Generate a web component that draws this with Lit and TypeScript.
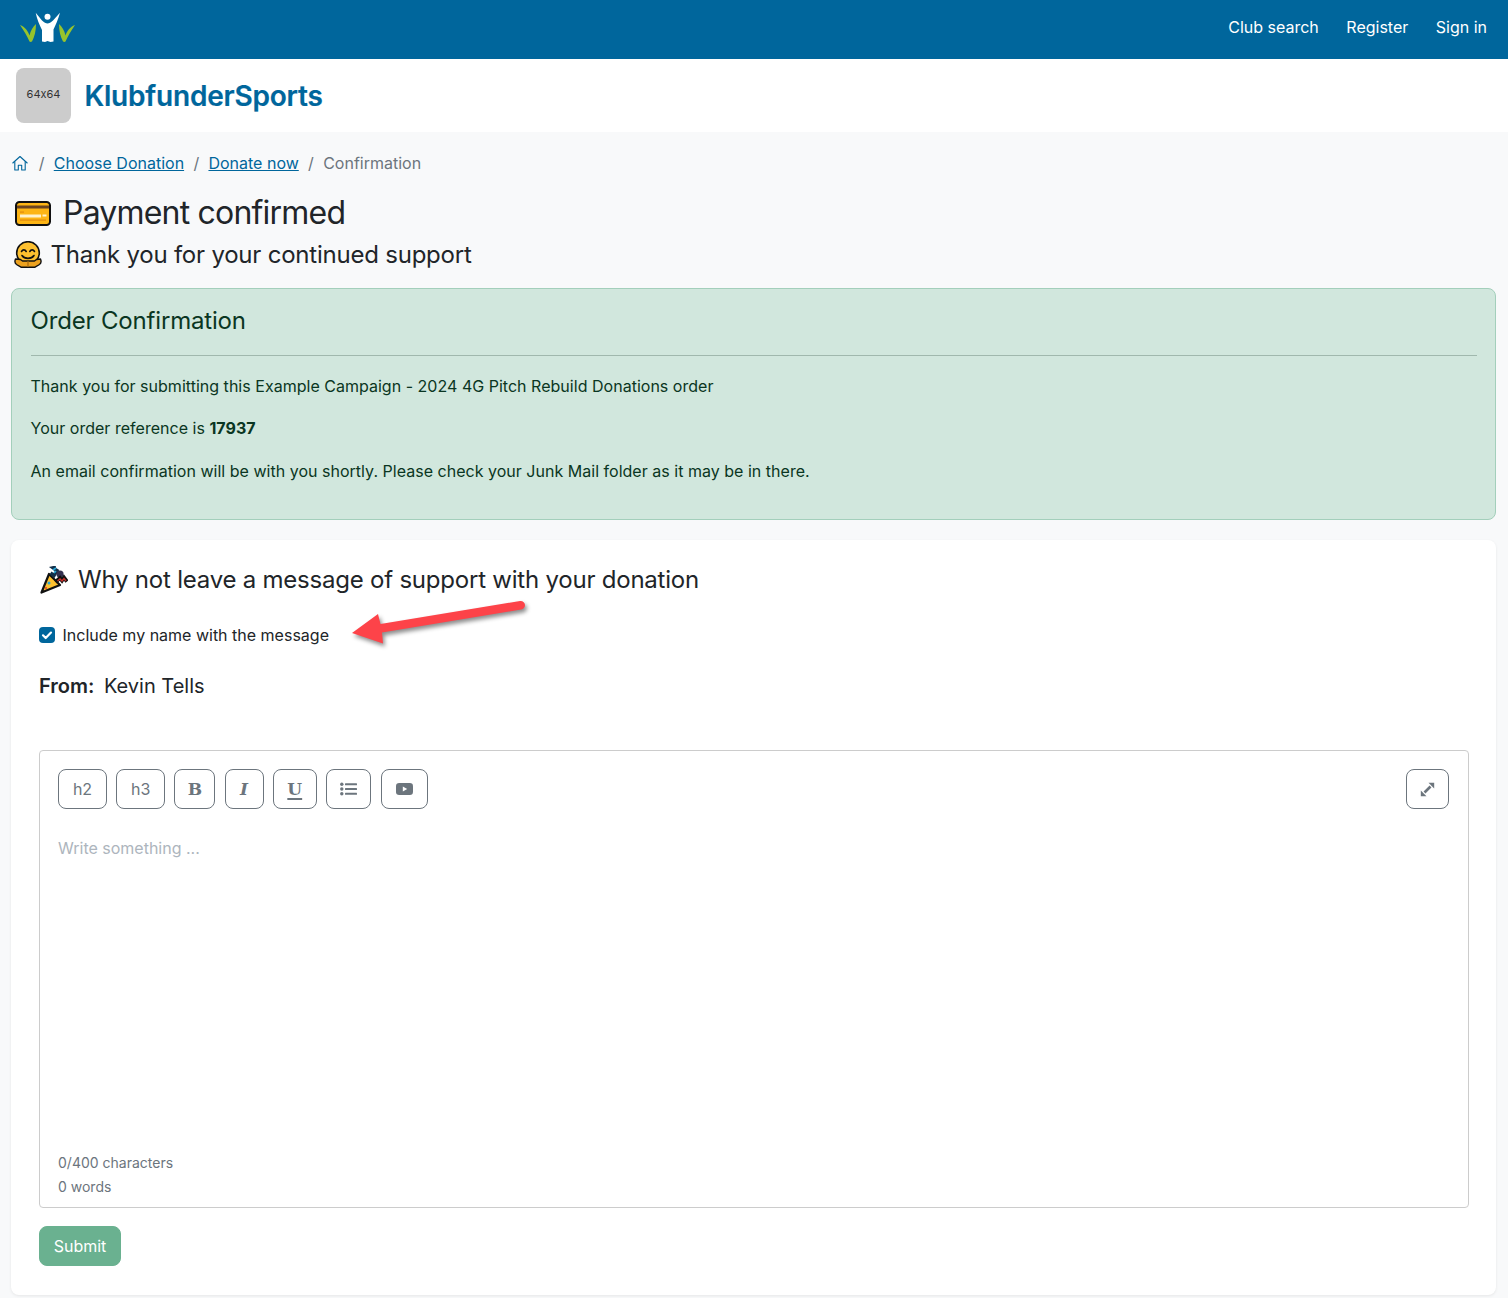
import { LitElement, html, css, svg } from "lit";
import { customElement } from "lit/decorators.js";

const logo = svg`<svg width="60" height="36" viewBox="18 10 60 36">
<path fill="#97c42c" d="M20 25C25 27 28 31 29.500 35.500C30.500 30.500 33 27 36 24C36 31 34.500 37 32 41.500C31 42 30 42 29.500 41.500C27 36 23.500 30 20 25Z"/>
<path fill="#97c42c" d="M75 25C70 27 67 31 65.500 35.500C64.500 30.500 62 27 59 24C59 31 60.500 37 63 41.500C64 42 65 42 65.500 41.500C68 36 71.500 30 75 25Z"/>
<circle cx="47.500" cy="16.800" r="3" fill="#fff"/>
<path fill="#fff" d="M35.700 12.700L42 20.500C44 22.500 46 23.500 47.500 23.500C49 23.500 51 22.500 53 20.500L60 12.700C58 20 55.500 25 53.500 29.500V41.500L50.500 42L47.500 41L45 42L42 41.500V30C39.500 25 37 19 35.700 12.700Z"/>
</svg>`;

const home = svg`<svg width="16" height="16" viewBox="0 0 16 16" fill="none" stroke="#00669c" stroke-width="1.100" stroke-linejoin="round" stroke-linecap="round"><path d="M.8 8L8 1.500L15.200 8"/><path d="M2.800 6.500V15H6.300V10.300H9.700V15H13.200V6.500"/></svg>`;

const card = svg`<svg class="ic-card" width="36" height="25" viewBox="0 0 36 25">
<rect x="1" y="1" width="34" height="23" rx="3.500" fill="#fdb515" stroke="#111" stroke-width="2"/>
<rect x="2" y="4.500" width="32" height="3" fill="#6b4420"/>
<rect x="5" y="13.500" width="21" height="3" fill="#fff2cc"/>
<rect x="27.500" y="13.500" width="4" height="2" fill="#fff2cc"/>
<rect x="5" y="10.500" width="4" height="1.200" fill="#e08a10"/>
<rect x="5" y="18.500" width="26" height="1.200" fill="#e08a10"/>
</svg>`;

const hug = svg`<svg class="ic-hug" width="28" height="27" viewBox="0 0 28 27">
<circle cx="14" cy="12" r="11.300" fill="#fdc02f" stroke="#111" stroke-width="1.600"/>
<path d="M7.500 10.500c1.200-2.200 3.500-2.200 4.700 0M15.800 10.500c1.200-2.200 3.500-2.200 4.700 0" fill="none" stroke="#111" stroke-width="1.600" stroke-linecap="round"/>
<path d="M8 14.500c2.500 3.800 9.500 3.800 12 0" fill="none" stroke="#111" stroke-width="1.600" stroke-linecap="round"/>
<path d="M1.500 18c-1 2.500-.5 4.500 1 5.500l4.500 2.700h14l4.500-2.700c1.500-1 2-3 1-5.500l-4 .5-2 1.500h-12l-2-1.500z" fill="#eda21f" stroke="#111" stroke-width="1.400" stroke-linejoin="round"/>
<path d="M14 20V26" stroke="#a86a10" stroke-width="1.200"/>
</svg>`;

const party = svg`<svg class="ic-party" width="28" height="28" viewBox="0 0 28 28">
<path d="M1.500 26.500L9 8L20 19Z" fill="#fdc02f" stroke="#111" stroke-width="2.200" stroke-linejoin="round"/>
<circle cx="9" cy="17" r="1.500" fill="#27a7d8"/><circle cx="6" cy="22" r="1.100" fill="#e0442e"/>
<path d="M10.500 7L14 9.500L17 4.500L13 1.800L16 1" fill="none" stroke="#12304a" stroke-width="3.400"/>
<path d="M13 4L16 2M14 7L16 5" stroke="#27a7d8" stroke-width="1.700"/>
<circle cx="20" cy="8" r="3.600" fill="#33304f"/>
<path d="M15.500 16L20 12L22 14.500L24 11.500L27 15.500" fill="none" stroke="#111" stroke-width="3.800"/>
<path d="M17.500 15L20 13L22 15L24 12.500L26 15" fill="none" stroke="#c9302c" stroke-width="1.400"/>
</svg>`;

const check = svg`<svg width="16" height="16" viewBox="0 0 16 16"><path d="M4 8.300l2.700 2.700L12 5.600" fill="none" stroke="#fff" stroke-width="2.200" stroke-linecap="round" stroke-linejoin="round"/></svg>`;

const list = svg`<svg width="17" height="14" viewBox="0 0 17 14" fill="#6c757d"><circle cx="1.800" cy="2.200" r="1.700"/><circle cx="1.800" cy="7" r="1.700"/><circle cx="1.800" cy="11.800" r="1.700"/><rect x="5" y="1.200" width="12" height="2" rx=".5"/><rect x="5" y="6" width="12" height="2" rx=".5"/><rect x="5" y="10.800" width="12" height="2" rx=".5"/></svg>`;

const yt = svg`<svg width="17" height="12" viewBox="0 0 17 12"><rect width="17" height="12" rx="3.200" fill="#6c757d"/><path d="M6.800 3.500L11.200 6L6.800 8.500Z" fill="#fff"/></svg>`;

const expand = svg`<svg width="15" height="15" viewBox="0 0 15 15" fill="#6c757d"><path d="M8.500.8H14.200V6.500Z"/><path d="M.8 8.500V14.200H6.500Z"/><path d="M4.500 10.500L10.500 4.500" stroke="#6c757d" stroke-width="2.600"/></svg>`;

const arrow = svg`<svg class="arrow" width="190" height="55" viewBox="345 595 190 55">
<path fill="#fd4349" d="M352 633L378 614L380.500 624L520 601C522.500 600.600 525 602.500 525 605C525 607.500 523.500 609 521 609.500L382 632.500L383 643.500Z"/>
</svg>`;

@customElement("app-root")
export class AppRoot extends LitElement {
  static styles = css`
    :host {
      display: block;
      min-height: 1298px;
      background: #f8f9fa;
      color: #212529;
      font-family: Inter, "Liberation Sans", sans-serif;
      font-size: 16px;
      line-height: 24px;
    }
    svg { display: block; flex: none; }
    .nav {
      height: 59px;
      background: #00669c;
      display: flex;
      align-items: center;
      justify-content: space-between;
      padding: 0 21px 0 18px;
    }
    .nav-links { display: flex; gap: 27.500px; margin-top: -6px; }
    .nav-links a { color: #fff; text-decoration: none; }
    .nav .logo { margin-top: -3px; }
    .brand {
      height: 73px;
      background: #fff;
      display: flex;
      align-items: center;
      gap: 13.500px;
      padding-left: 16px;
    }
    .ph {
      width: 55px;
      height: 55px;
      border-radius: 8px;
      background: #ccc;
      color: #333;
      font-size: 11px;
      font-feature-settings: "calt" 0;
      display: flex;
      align-items: center;
      justify-content: center;
      padding-bottom: 3px;
      box-sizing: border-box;
    }
    .brand-name { color: #00669c; font-size: 28px; font-weight: 600; line-height: 34px; letter-spacing: -0.2px; -webkit-text-stroke: 0.2px #00669c; }
    main { padding: 0 12px 0 11px; }
    .crumbs { display: flex; align-items: center; gap: 9.300px; padding: 19px 0 0 1px; color: #6c757d; height: 24px; }
    .crumbs a { color: #00669c; text-decoration: underline; }
    .crumbs .home { display: block; margin-right: 1.400px; }
    h1, h2, h3, p { margin: 0; font-weight: 400; }
    .title { display: flex; align-items: center; font-size: 32px; line-height: 38px; margin-top: 19px; gap: 12px; padding-left: 4px; letter-spacing: -0.8px; }
    .sub { display: flex; align-items: center; font-size: 24px; line-height: 29px; margin-top: 8px; gap: 8.500px; padding-left: 3px; letter-spacing: -0.22px; }
    .alert {
      margin-top: 19px;
      height: 232px;
      box-sizing: border-box;
      background: #d1e7dd;
      border: 1px solid #a3cfbb;
      border-radius: 8px;
      color: #0a3622;
      padding: 17px 18px 0 18.500px;
    }
    .alert h2 { font-size: 24px; line-height: 29px; letter-spacing: -0.17px; }
    .alert hr { border: 0; border-top: 1px solid #a0b8ad; margin: 20px 0 18px; }
    .alert p { line-height: 24px; margin-bottom: 18.300px; letter-spacing: 0.02px; }
    .panel {
      position: relative;
      margin-top: 20px;
      height: 755px;
      box-sizing: border-box;
      background: #fff;
      border-radius: 8px;
      box-shadow: 0 1px 3px rgba(0, 0, 0, 0.08);
      padding: 25px 27px 0 28px;
      display: flex;
      flex-direction: column;
    }
    .panel h3 { display: flex; align-items: center; font-size: 24px; line-height: 29px; gap: 10px; padding-left: 1px; letter-spacing: -0.22px; }
    .arrow { position: absolute; left: 334px; top: 55px; filter: drop-shadow(2px 3px 2px rgba(0, 0, 0, 0.45)); }
    .chk { display: flex; align-items: center; gap: 7.500px; margin-top: 29px; color: #212529; }
    .box { width: 16px; height: 16px; border-radius: 4px; background: #00669c; }
    .from { display: flex; gap: 9.500px; font-size: 20px; line-height: 24px; margin-top: 27px; }
    .from b { font-weight: 600; }
    .editor {
      margin-top: 52px;
      height: 458px;
      box-sizing: border-box;
      border: 1px solid #ccc;
      border-radius: 4px;
      padding: 18px 19px 8px 18px;
      display: flex;
      flex-direction: column;
    }
    .toolbar { display: flex; gap: 9.200px; }
    .toolbar .spacer { flex: 1; }
    button {
      height: 40px;
      box-sizing: border-box;
      border: 1px solid #6c757d;
      border-radius: 8px;
      background: #fff;
      color: #6c757d;
      font: 16px Inter, "Liberation Sans", sans-serif;
      padding: 0;
      display: flex;
      align-items: center;
      justify-content: center;
    }
    .t { width: 49px; }
    .g { font-family: "DejaVu Serif", serif; font-size: 17px; font-weight: 700; }
    .b { width: 41px; }
    .i { width: 39px; font-style: italic; }
    .u { width: 44px; }
    .u span { text-decoration: underline; text-decoration-thickness: 2px; text-underline-offset: 3px; }
    .l { width: 45px; }
    .y { width: 47px; margin-left: 0.600px; }
    .e { width: 43px; }
    .body { flex: 1; padding-top: 27px; color: #adb5bd; }
    .meta { font-size: 14px; line-height: 24px; color: #6c757d; }
    .submit {
      margin-top: 18px;
      align-self: flex-start;
      width: 82px;
      background: #6ab190;
      border-color: #6ab190;
      color: #fff;
    }
  `;

  render() {
    return html`
      <div class="nav">
        <div class="logo">${logo}</div>
        <div class="nav-links"><a>Club search</a><a>Register</a><a>Sign in</a></div>
      </div>
      <div class="brand">
        <div class="ph">64x64</div>
        <div class="brand-name">KlubfunderSports</div>
      </div>
      <main>
        <nav class="crumbs">
          <span class="home">${home}</span><span>/</span>
          <a>Choose Donation</a><span>/</span>
          <a>Donate now</a><span>/</span>
          <span>Confirmation</span>
        </nav>
        <h1 class="title">${card}<span>Payment confirmed</span></h1>
        <h2 class="sub">${hug}<span>Thank you for your continued support</span></h2>
        <section class="alert">
          <h2>Order Confirmation</h2>
          <hr />
          <p>Thank you for submitting this Example Campaign - 2024 4G Pitch Rebuild Donations order</p>
          <p>Your order reference is <b>17937</b></p>
          <p>An email confirmation will be with you shortly. Please check your Junk Mail folder as it may be in there.</p>
        </section>
        <section class="panel">
          <h3>${party}<span>Why not leave a message of support with your donation</span></h3>
          ${arrow}
          <label class="chk"><span class="box">${check}</span><span>Include my name with the message</span></label>
          <div class="from"><b>From:</b><span>Kevin Tells</span></div>
          <div class="editor">
            <div class="toolbar">
              <button class="t">h2</button>
              <button class="t">h3</button>
              <button class="g b">B</button>
              <button class="g i">I</button>
              <button class="g u"><span>U</span></button>
              <button class="l">${list}</button>
              <button class="y">${yt}</button>
              <span class="spacer"></span>
              <button class="e">${expand}</button>
            </div>
            <div class="body">Write something ...</div>
            <div class="meta">0/400 characters</div>
            <div class="meta">0 words</div>
          </div>
          <button class="submit">Submit</button>
        </section>
      </main>
    `;
  }
}
